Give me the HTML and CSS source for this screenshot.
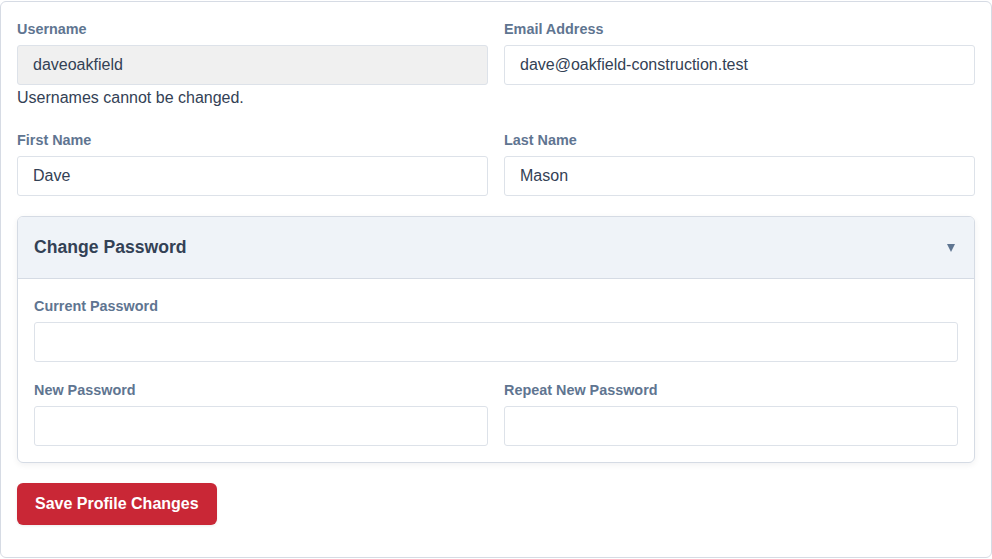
FILE: index.html
```html
<!DOCTYPE html>
<html lang="en">
<head>
<meta charset="utf-8">
<title>Profile</title>
<link rel="stylesheet" href="styles.css">
</head>
<body>
<div class="page">
  <form class="card">
    <div class="row">
      <div class="field">
        <label class="label">Username</label>
        <input class="input input-disabled" type="text" value="daveoakfield" disabled>
        <div class="help">Usernames cannot be changed.</div>
      </div>
      <div class="field">
        <label class="label">Email Address</label>
        <input class="input" type="text" value="dave@oakfield-construction.test">
      </div>
    </div>
    <div class="row">
      <div class="field">
        <label class="label">First Name</label>
        <input class="input" type="text" value="Dave">
      </div>
      <div class="field">
        <label class="label">Last Name</label>
        <input class="input" type="text" value="Mason">
      </div>
    </div>
    <div class="accordion">
      <div class="acc-header">
        <span class="acc-title">Change Password</span>
        <span class="acc-caret" aria-hidden="true"></span>
      </div>
      <div class="acc-body">
        <div class="field">
          <label class="label">Current Password</label>
          <input class="input" type="password">
        </div>
        <div class="row row-inner">
          <div class="field">
            <label class="label">New Password</label>
            <input class="input" type="password">
          </div>
          <div class="field">
            <label class="label">Repeat New Password</label>
            <input class="input" type="password">
          </div>
        </div>
      </div>
    </div>
    <div class="actions">
      <button class="btn" type="button">Save Profile Changes</button>
    </div>
  </form>
</div>
</body>
</html>
```
FILE: styles.css
```css
* { box-sizing: border-box; }
html, body { margin: 0; padding: 0; background: #ffffff; }
body {
  font-family: "Liberation Sans", Arial, sans-serif;
  color: #334155;
}
.page { padding-top: 1px; width: 992px; }
.card {
  border: 1px solid #d6dbe4;
  border-radius: 6px;
  padding: 16px 16px 31px 16px;
  display: flex;
  flex-direction: column;
  height: 557px;
}
.row {
  display: grid;
  grid-template-columns: 1fr 1fr;
  column-gap: 16px;
  margin-bottom: 19px;
}
.field { display: flex; flex-direction: column; }
.label {
  font-size: 14.4px;
  font-weight: bold;
  line-height: 22px;
  color: #5f7591;
  margin-bottom: 5px;
}
.input {
  height: 40px;
  border: 1px solid #dde2e9;
  border-radius: 3px;
  padding: 0 15px;
  font-family: "Liberation Sans", Arial, sans-serif;
  font-size: 16px;
  color: #334155;
  background: #ffffff;
  outline: none;
  width: 100%;
}
.input-disabled { background: #f0f0f0; color: #334155; -webkit-text-fill-color: #334155; opacity: 1; }
.help { font-size: 16px; line-height: 24px; color: #334155; padding-top: 1px; }
.accordion {
  border: 1px solid #d5dbe4;
  border-radius: 6px;
  box-shadow: 0 2px 6px rgba(15, 23, 42, 0.06);
  overflow: hidden;
  margin-top: 1px;
  margin-bottom: 20px;
}
.acc-header {
  background: #eff3f8;
  border-bottom: 1px solid #d5dbe4;
  height: 62px;
  padding: 0 16px;
  display: flex;
  align-items: center;
  justify-content: space-between;
}
.acc-title { font-size: 17.6px; font-weight: bold; color: #334155; }
.acc-caret {
  width: 0;
  height: 0;
  border-left: 4px solid transparent;
  border-right: 4px solid transparent;
  border-top: 8px solid #5f7591;
  margin-right: 3px;
  margin-top: 1px;
}
.acc-body { padding: 16px 16px 16px 16px; }
.acc-body > .field { margin-bottom: 17px; }
.row-inner { margin-bottom: 0; }
.actions { display: flex; }
.btn {
  background: #c92736;
  color: #ffffff;
  border: none;
  border-radius: 6px;
  height: 42px;
  padding: 0 18px;
  font-family: "Liberation Sans", Arial, sans-serif;
  font-size: 16px;
  font-weight: bold;
  box-shadow: 0 1px 3px rgba(0,0,0,0.08);
}
```
